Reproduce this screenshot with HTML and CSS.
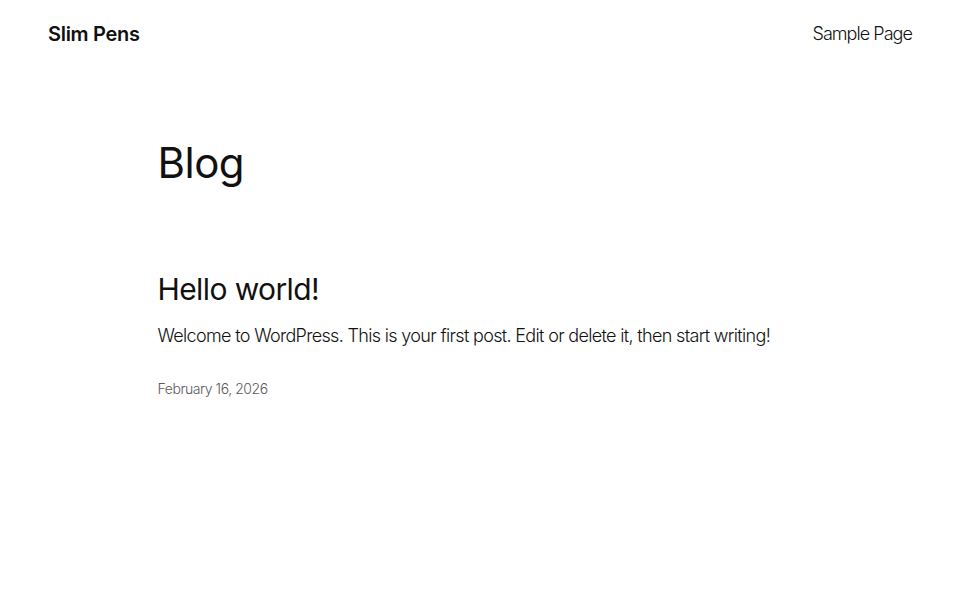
FILE: index.html
```html
<!DOCTYPE html>
<html lang="en">
<head>
<meta charset="utf-8">
<title>Blog – Slim Pens</title>
<link rel="stylesheet" href="styles.css">
</head>
<body>
<header class="site-header">
  <a class="site-title" href="#">Slim Pens</a>
  <nav class="site-nav"><a href="#">Sample Page</a></nav>
</header>
<main class="content">
  <h1 class="page-title">Blog</h1>
  <article class="post">
    <h2 class="post-title"><a href="#">Hello world!</a></h2>
    <p class="post-excerpt">Welcome to WordPress. This is your first post. Edit or delete it, then start writing!</p>
    <time class="post-date">February 16, 2026</time>
  </article>
</main>
</body>
</html>
```
FILE: styles.css
```css
html, body {
  margin: 0;
  padding: 0;
  background: #fff;
}
body {
  font-family: Inter, "Noto Sans", sans-serif;
  color: #111;
}
a {
  color: inherit;
  text-decoration: none;
}
.site-header {
  display: flex;
  justify-content: space-between;
  align-items: center;
  padding: 20px 48px 0 48px;
  height: 28px;
}
.site-title {
  font-size: 20px;
  font-weight: 600;
  letter-spacing: -0.3px;
}
.site-nav {
  padding-bottom: 2px;
}
.site-nav a {
  font-size: 18px;
  font-weight: 300;
  letter-spacing: -0.95px;
}
.content {
  width: 645px;
  margin: 0 auto;
  padding-top: 90px;
}
.page-title {
  font-size: 42px;
  font-weight: 400;
  line-height: 1.2;
  letter-spacing: -0.5px;
  margin: 0;
}
.post {
  margin-top: 83px;
}
.post-title {
  font-size: 30px;
  font-weight: 400;
  line-height: 1.2;
  letter-spacing: -0.6px;
  margin: 0;
}
.post-excerpt {
  font-size: 18px;
  font-weight: 300;
  line-height: 1.5;
  letter-spacing: -0.67px;
  margin: 15px 0 0 0;
}
.post-date {
  display: block;
  margin-top: 31px;
  font-size: 14px;
  font-weight: 300;
  letter-spacing: -0.45px;
  color: #5a5a5a;
}
```
